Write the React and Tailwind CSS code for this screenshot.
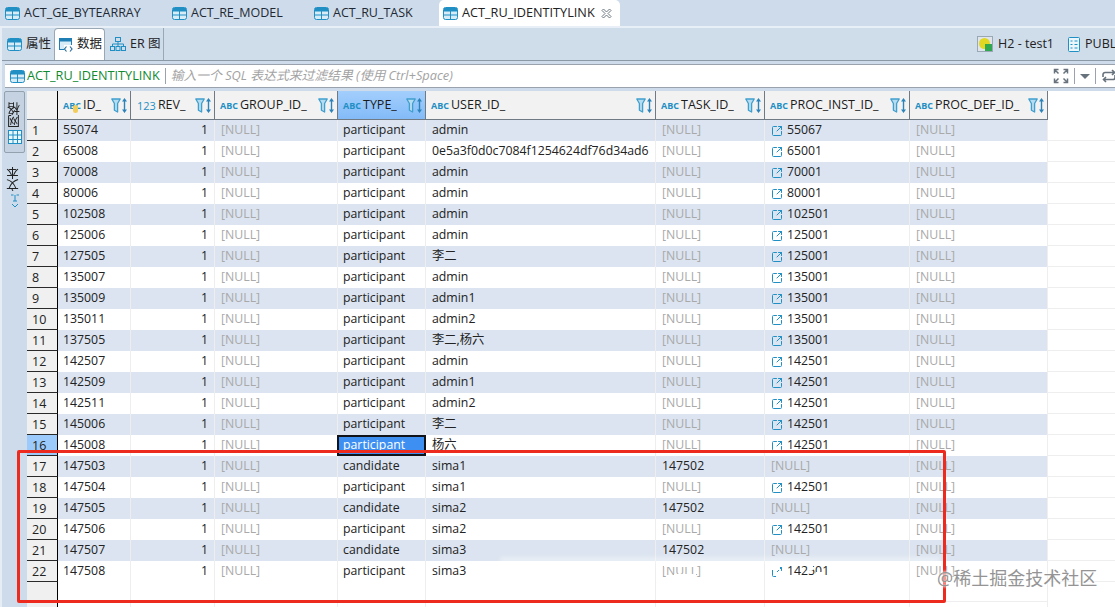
import { SquareArrowOutUpRight } from 'lucide-react';

const FONT = "font-['Open_Sans','Noto_Sans_CJK_SC',sans-serif]";

const COLUMNS = [
  { key: 'id', label: 'ID_', width: 'w-[73px]', kind: 'ABC' },
  { key: 'rev', label: 'REV_', width: 'w-[84px]', kind: '123' },
  { key: 'group', label: 'GROUP_ID_', width: 'w-[123px]', kind: 'ABC' },
  { key: 'type', label: 'TYPE_', width: 'w-[88px]', kind: 'ABC', active: true },
  { key: 'user', label: 'USER_ID_', width: 'w-[230px]', kind: 'ABC' },
  { key: 'task', label: 'TASK_ID_', width: 'w-[109px]', kind: 'ABC' },
  { key: 'inst', label: 'PROC_INST_ID_', width: 'w-[145px]', kind: 'ABC' },
  { key: 'def', label: 'PROC_DEF_ID_', width: 'w-[138px]', kind: 'ABC' },
];

const P = 'participant';
const C = 'candidate';
const ROWS = [
  ['55074', P, 'admin', null, '55067'],
  ['65008', P, '0e5a3f0d0c7084f1254624df76d34ad6', null, '65001'],
  ['70008', P, 'admin', null, '70001'],
  ['80006', P, 'admin', null, '80001'],
  ['102508', P, 'admin', null, '102501'],
  ['125006', P, 'admin', null, '125001'],
  ['127505', P, '李二', null, '125001'],
  ['135007', P, 'admin', null, '135001'],
  ['135009', P, 'admin1', null, '135001'],
  ['135011', P, 'admin2', null, '135001'],
  ['137505', P, '李二,杨六', null, '135001'],
  ['142507', P, 'admin', null, '142501'],
  ['142509', P, 'admin1', null, '142501'],
  ['142511', P, 'admin2', null, '142501'],
  ['145006', P, '李二', null, '142501'],
  ['145008', P, '杨六', null, '142501'],
  ['147503', C, 'sima1', '147502', null],
  ['147504', P, 'sima1', null, '142501'],
  ['147505', C, 'sima2', '147502', null],
  ['147506', P, 'sima2', null, '142501'],
  ['147507', C, 'sima3', '147502', null],
  ['147508', P, 'sima3', null, '142501'],
];

const TableIcon = ({ className = '' }) => (
  <svg viewBox="0 0 15 13" className={`h-[13px] w-[15px] shrink-0 ${className}`}>
    <rect x="0.5" y="0.5" width="14" height="12" rx="2" fill="#d7ecf7" stroke="#1f8fc4" />
    <rect x="1" y="1" width="13" height="3.5" fill="#1f8fc4" />
    <path d="M7.5 4v8M1 8h13" stroke="#1f8fc4" />
  </svg>
);

const FilterSort = () => (
  <svg viewBox="0 0 16 15" className="h-[15px] w-4 shrink-0">
    <path d="M0.8 1h8.400L6.600 5.500v8.500l-3.200-1.800V5.500z" fill="#b5dcf0" stroke="#3f9fce" strokeWidth="1.3" strokeLinejoin="round" />
    <path d="M13.500 0l2.500 3.500h-5zM13.500 15l2.500-3.500h-5z" fill="#2b83ba" />
    <path d="M13.500 3v9" stroke="#2b83ba" strokeWidth="1.400" />
  </svg>
);

const HeaderCell = ({ col }) => (
  <div className={`${col.width} shrink-0 h-full flex items-center border-r border-[#6f7a85] pl-[5px] pr-[3px] ${col.active ? 'bg-gradient-to-b from-[#a3cefc] to-[#83bbf8]' : 'bg-[#f2f2f2]'}`}>
    {col.kind === '123' ? (
      <span className="ml-[1px] mr-[2px] text-[11px] leading-none text-[#1f8fc4]">123</span>
    ) : (
      <span className="relative mr-[2px] text-[9px] font-bold leading-none text-[#1f8fc4]">
        ABC
        {col.key === 'id' && <span className="absolute left-[10px] top-[4px] h-[8px] w-[5px] rounded-full bg-[#f3cd5c]" />}
      </span>
    )}
    <span className="text-[12.5px] text-[#1c1c1c] whitespace-nowrap">{col.label}</span>
    <span className="ml-auto"><FilterSort /></span>
  </div>
);

const Null = () => <span className="text-[#a9a9a9]">[NULL]</span>;

const Cell = ({ width, pad = 'pl-[6px]', className = '', children }) => (
  <div className={`${width} ${pad} shrink-0 h-full flex items-center border-r border-[#eeeeee] pr-[6px] whitespace-nowrap overflow-hidden ${className}`}>
    {children}
  </div>
);

const Row = ({ row, index }) => {
  const [id, type, user, task, inst] = row;
  const striped = index % 2 === 0;
  const selected = index === 15;
  return (
    <div className="flex h-[21px] shrink-0 text-[12.3px]">
      <div className={`w-[31px] shrink-0 border-r border-b border-r-black border-b-[#2a2a2a] pl-[5px] pt-[2px] text-[12.5px] leading-[17px] ${selected ? 'bg-[#9ccbfb]' : 'bg-[#f0f0f0]'}`}>
        {index + 1}
      </div>
      <div className={`flex h-full ${striped ? 'bg-[#dbe4f0]' : 'bg-white'}`}>
        <Cell width="w-[73px]" pad="pl-[5px]">{id}</Cell>
        <Cell width="w-[84px]" className="justify-end">1</Cell>
        <Cell width="w-[123px]"><Null /></Cell>
        {selected ? (
          <div className="ml-[-1px] w-[89px] shrink-0 h-full flex items-center border-2 border-[#10131a] bg-[#3d90f2] pl-[4px] text-white">{type}</div>
        ) : (
          <Cell width="w-[88px]" pad="pl-[5px]">{type}</Cell>
        )}
        <Cell width="w-[230px]">{user}</Cell>
        <Cell width="w-[109px]" pad="pl-[6px]">{task ?? <Null />}</Cell>
        <Cell width="w-[145px]">
          {inst ? (
            <>
              <SquareArrowOutUpRight size={12} strokeWidth={2} className="text-[#1f8fc4] mr-[4px] shrink-0" />
              {inst}
            </>
          ) : <Null />}
        </Cell>
        <Cell width="w-[138px]"><Null /></Cell>
      </div>
      <div className="flex-1 border-b border-[#eeeeee] bg-white" />
    </div>
  );
};

const Tab = ({ label, className = '' }) => (
  <div className={`flex items-center gap-[4px] ${className}`}>
    <TableIcon />
    <span className="text-[12.5px] text-[#1f2933]">{label}</span>
  </div>
);

// bits of the table rubbed out by the watermark's halo
const SMUDGES = [
  'left-[772px] top-[564px] w-[8px] h-[6px]',
  'left-[776px] top-[572px] w-[7px] h-[5px]',
  'left-[808px] top-[565px] w-[5px] h-[5px]',
  'left-[816px] top-[572px] w-[6px] h-[4px]',
  'left-[664px] top-[564px] w-[30px] h-[3px]',
  'left-[674px] top-[574px] w-[22px] h-[3px]',
];

export default function App() {
  return (
    <div className={`${FONT} relative h-[607px] w-[1115px] overflow-hidden bg-[#cddbea] text-[12.5px] text-[#222]`}>
      {/* editor tabs */}
      <div className="flex h-[26px] items-center pl-[5px]">
        <Tab label="ACT_GE_BYTEARRAY" className="w-[167px]" />
        <Tab label="ACT_RE_MODEL" className="w-[142px]" />
        <Tab label="ACT_RU_TASK" className="w-[125px]" />
        <div className="flex h-full w-[181px] items-center rounded-t-[5px] bg-white pl-[4px]">
          <TableIcon />
          <span className="ml-[4px] text-[12.7px]">ACT_RU_IDENTITYLINK</span>
          <svg viewBox="0 0 11 11" className="ml-[6px] h-[11px] w-[11px]" fill="#fff" stroke="#6d7882">
            <path d="M1 2.500L2.500 1l3 3 3-3L10 2.500l-3 3 3 3L8.500 10l-3-3-3 3L1 8.500l3-3z" />
          </svg>
        </div>
      </div>
      <div className="h-[2px] bg-[#e9eff6]" />

      <div className="h-[579px] border-l-2 border-[#e6edf5]">
        {/* sub tabs */}
        <div className="flex h-[33px] items-stretch border-b border-[#8b98a6] bg-[#cfdcea]">
          <div className="flex w-[52px] items-center gap-[4px] pl-[5px]">
            <TableIcon />
            <span>属性</span>
          </div>
          <div className="flex w-[51px] items-center gap-[4px] rounded-t-[4px] border border-b-0 border-[#9aa7b4] bg-white pl-[4px]">
            <svg viewBox="0 0 14 14" className="h-[14px] w-[14px] shrink-0">
              <rect x="0.5" y="0.5" width="12" height="11" fill="#d7ecf7" stroke="#1f7fb5" />
              <rect x="1" y="1" width="11" height="2.500" fill="#1f7fb5" />
              <rect x="5" y="7" width="9" height="7" fill="#fff" />
              <path d="M7.500 8.500L5.500 11l2 2.500M11 8.500l2 2.500-2 2.500" fill="none" stroke="#2a6f9c" strokeWidth="1.200" />
            </svg>
            <span>数据</span>
          </div>
          <div className="flex w-[59px] items-center gap-[4px] border-r border-[#9aa7b4] pl-[5px]">
            <svg viewBox="0 0 16 16" className="h-4 w-4 shrink-0" fill="none" stroke="#1f8fc4">
              <rect x="5.500" y="1.500" width="5" height="4" />
              <rect x="0.500" y="10.500" width="4" height="4" />
              <rect x="6" y="10.500" width="4" height="4" />
              <rect x="11.500" y="10.500" width="4" height="4" />
              <path d="M8 5.500v5M2.500 10.500V8h11v2.500" />
            </svg>
            <span>ER 图</span>
          </div>
          <div className="ml-auto flex items-center">
            <span className="relative mr-[5px] h-[16px] w-[16px] border border-[#9aa7b4] bg-[#dfe5ea]">
              <span className="absolute left-[1px] top-[1px] h-[11px] w-[11px] rounded-full bg-[#e2d824]" />
              <span className="absolute bottom-0 right-0 h-[7px] w-[7px] bg-[#2fa84f]" />
            </span>
            <span className="mr-[14px]">H2 - test1</span>
            <svg viewBox="0 0 12 15" className="mr-[5px] h-[15px] w-[12px] shrink-0" fill="#eaf6fb" stroke="#1f8fc4">
              <rect x="0.500" y="0.500" width="11" height="14" rx="1" />
              <path d="M2.500 4h2M2.500 7.500h2M2.500 11h2M6.500 4h3M6.500 7.500h3M6.500 11h3" />
            </svg>
            <span className="w-[30px] overflow-hidden whitespace-nowrap">PUBLIC</span>
          </div>
        </div>

        {/* filter bar */}
        <div className="ml-[3px] mt-[3px] flex h-[24px] items-center border-y border-[#9aa3ad] bg-white pl-[5px]">
          <TableIcon />
          <span className="ml-[2px] text-[12.7px] font-medium text-[#0f8a2f]">ACT_RU_IDENTITYLINK</span>
          <span className="ml-[5px] h-[16px] w-px bg-[#9aa3ad]" />
          <span className="ml-[5px] text-[12.8px] italic text-[#a3a3a3]">输入一个 SQL 表达式来过滤结果 (使用 Ctrl+Space)</span>
          <div className="ml-auto flex items-center gap-[5px]">
            <svg viewBox="0 0 16 16" className="h-4 w-4" fill="none" stroke="#67727d" strokeWidth="1.500">
              <path d="M1.500 5.500v-4h4M1.500 1.500l4 4M14.500 5.500v-4h-4M14.500 1.500l-4 4M1.500 10.500v4h4M1.500 14.500l4-4M14.500 10.500v4h-4M14.500 14.500l-4-4" />
            </svg>
            <span className="h-[16px] w-px bg-[#9aa3ad]" />
            <span className="h-0 w-0 border-x-[5px] border-t-[5px] border-x-transparent border-t-[#67727d]" />
            <span className="h-[16px] w-px bg-[#9aa3ad]" />
            <svg viewBox="0 0 16 14" className="mr-[-2px] h-[14px] w-4" fill="none" stroke="#67727d" strokeWidth="1.600">
              <path d="M2 8V5.500A2 2 0 0 1 4 3.500h9M11 1l2.500 2.500L11 6M14 6v2.500a2 2 0 0 1-2 2H3M5 8l-2.500 2.500L5 13" />
            </svg>
          </div>
        </div>

        {/* results */}
        <div className="mt-[3px] flex h-[516px] items-start">
          <div className="w-[25px] shrink-0">
            <div className="ml-[2px] flex h-[62px] w-[21px] flex-col items-center rounded-[2px] border border-[#93a0ad] bg-[#c4d2e1] pt-[10px]">
              <span className="[writing-mode:vertical-rl] rotate-180 text-[13px] leading-none">网格</span>
              <svg viewBox="0 0 14 14" className="mt-[2px] h-[14px] w-[14px]" fill="#eaf6fb" stroke="#1f8fc4">
                <rect x="0.500" y="0.500" width="13" height="13" />
                <path d="M5 0.500v13M9.500 0.500v13M0.500 5h13M0.500 9.500h13" />
              </svg>
            </div>
            <div className="mt-[13px] flex flex-col items-center">
              <span className="[writing-mode:vertical-rl] rotate-180 text-[12.5px] leading-none">文本</span>
              <svg viewBox="0 0 10 14" className="mt-[3px] h-[14px] w-[10px]" fill="none" stroke="#1f8fc4">
                <path d="M1 1h2.500M6.500 1H9M5 1v6M3 7h4M2 10l3 3 3-3" />
              </svg>
            </div>
          </div>

          <div className="flex h-full min-w-0 flex-1 flex-col bg-white">
            <div className="flex h-[29px] shrink-0">
              <div className="w-[31px] shrink-0 border-r border-b border-r-black border-b-[#6f7a85] bg-[#f2f2f2]" />
              <div className="flex h-full border-b border-[#6f7a85]">
                {COLUMNS.map((col) => <HeaderCell key={col.key} col={col} />)}
              </div>
              <div className="flex-1 bg-white" />
            </div>
            {ROWS.map((row, i) => <Row key={row[0]} row={row} index={i} />)}
            <div className="flex min-h-0 flex-1">
              <div className="w-[31px] shrink-0 border-r border-black bg-[#f0f0f0]" />
              <div className="flex h-full">
                {COLUMNS.map((col) => (
                  <div key={col.key} className={`${col.width} shrink-0 border-r border-[#eeeeee]`}>
                    <div className="h-[20px] border-b border-[#eeeeee]" />
                  </div>
                ))}
              </div>
            </div>
          </div>
        </div>
      </div>

      {/* screenshot annotation */}
      <div className="pointer-events-none absolute left-[17px] top-[450px] h-[153px] w-[929px] rounded-[2px] border-[3px] border-[#ec2a1e]" />

      {/* watermark */}
      {SMUDGES.map((s) => (
        <div key={s} className={`pointer-events-none absolute bg-white ${s}`} />
      ))}
      <div className="pointer-events-none absolute left-[500px] top-[557px] h-[6px] w-[440px] bg-white/40 blur-[2px]" />
      <div className="pointer-events-none absolute left-[937px] top-[566px] flex h-[24px] items-center whitespace-nowrap text-[18px] text-[#949494] [text-shadow:0_0_3px_#fff,0_0_3px_#fff]">
        @稀土掘金技术社区
      </div>
    </div>
  );
}
